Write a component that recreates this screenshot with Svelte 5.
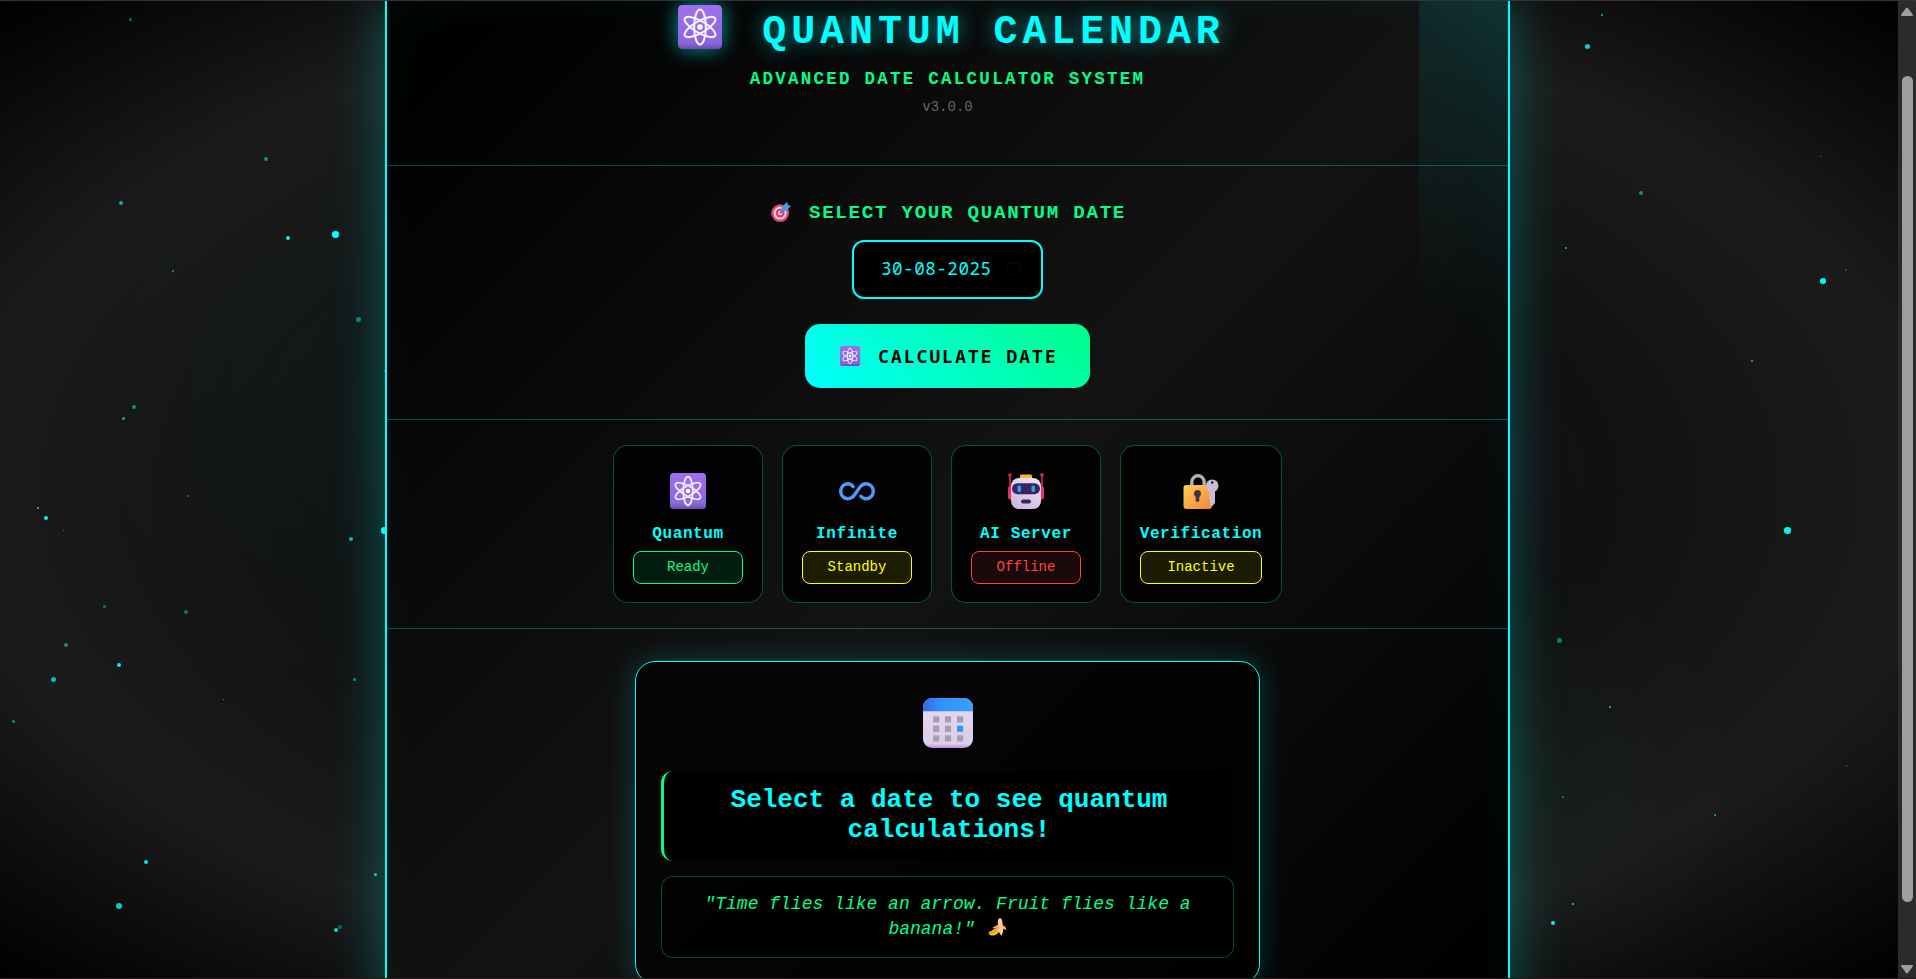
<script>
  const particles = [
    [130, 19, 3, 0.4], [266, 159, 4, 0.5], [121.3, 203.3, 4, 0.65], [335.3, 234.5, 6.5, 1], [288.3, 237.5, 4, 0.95],
    [173, 271, 2.3, 0.6], [358.3, 319.5, 5, 0.45], [134, 407, 4, 0.5], [123.3, 418.5, 3.5, 0.65], [188, 496, 2.2, 0.4],
    [384.5, 371, 2, 0.5], [38, 508, 2.8, 0.8], [46.3, 517.5, 4, 0.95], [63.5, 530.5, 1, 0.6], [351, 539, 4.6, 0.7],
    [384, 530.5, 6.5, 1], [104.3, 606.5, 3, 0.4], [186, 612, 4, 0.4], [66, 645, 4, 0.5], [119.3, 665.3, 4, 0.95],
    [53.4, 679.5, 5.5, 0.7], [354.4, 679.5, 3, 0.5], [223.5, 699.5, 1.1, 0.8], [13.4, 721.5, 3.2, 0.5], [146.3, 861.5, 4, 0.9],
    [375.4, 874.5, 3.6, 0.8], [119.4, 905.5, 6, 0.8], [335.5, 929.5, 4, 0.85], [340, 927, 4, 0.35],
    [1602, 15, 2.8, 0.75], [1587, 46, 5, 0.8], [1820.5, 156.5, 1.1, 0.8], [1641, 193, 4, 0.5], [1566, 248, 2.6, 0.65],
    [1823, 281, 5.6, 0.95], [1846, 270, 2.2, 0.35], [1752, 361, 2.8, 0.75], [1787.4, 530.5, 6.4, 0.95], [1559.4, 640.5, 5, 0.45],
    [1610, 707, 2.6, 0.8], [1846.5, 765.5, 1.1, 0.8], [1563, 797, 2.2, 0.45], [1715, 815, 2.4, 0.65], [1573, 904, 2.6, 0.85],
    [1553.4, 922.5, 4, 0.95]
  ];

  const cards = [
    { icon: 'atom', name: 'Quantum', status: 'Ready', tone: 'green' },
    { icon: 'infinity', name: 'Infinite', status: 'Standby', tone: 'yellow' },
    { icon: 'robot', name: 'AI Server', status: 'Offline', tone: 'red' },
    { icon: 'lock', name: 'Verification', status: 'Inactive', tone: 'yellow' }
  ];
</script>

<svg class="defs" width="0" height="0" aria-hidden="true">
  <defs>
    <linearGradient id="violet" x1="0" y1="0" x2="0" y2="1">
      <stop offset="0" stop-color="#a06fee" /><stop offset="0.85" stop-color="#8a66dc" /><stop offset="1" stop-color="#6f4bb0" />
    </linearGradient>
    <linearGradient id="shell" x1="1" y1="0" x2="0.3" y2="1">
      <stop offset="0" stop-color="#f0e8f4" /><stop offset="1" stop-color="#cdb9e0" />
    </linearGradient>
    <linearGradient id="gold" x1="0" y1="0" x2="1" y2="1">
      <stop offset="0" stop-color="#ffd04e" /><stop offset="1" stop-color="#f5813f" />
    </linearGradient>
    <linearGradient id="sky" x1="0" y1="0" x2="1" y2="0">
      <stop offset="0" stop-color="#3a63e8" /><stop offset="0.3" stop-color="#2f90fb" /><stop offset="1" stop-color="#35a2ff" />
    </linearGradient>
    <linearGradient id="page" x1="0" y1="0" x2="0" y2="1">
      <stop offset="0" stop-color="#e5daf0" /><stop offset="0.92" stop-color="#dccde9" /><stop offset="1" stop-color="#b98bdd" />
    </linearGradient>
  </defs>
</svg>

{#snippet icon(name)}
  <svg class="icon" viewBox="0 0 36 36" aria-hidden="true">
    {#if name === 'atom'}
      <rect width="36" height="36" rx="3.500" fill="url(#violet)" />
      <g fill="none" stroke="#f7efff" stroke-width="1.700">
        <ellipse cx="18" cy="18" rx="4.800" ry="14.300" />
        <ellipse cx="18" cy="18" rx="4.800" ry="14.300" transform="rotate(60 18 18)" />
        <ellipse cx="18" cy="18" rx="4.800" ry="14.300" transform="rotate(120 18 18)" />
      </g>
      <circle cx="18" cy="18" r="2.300" fill="#fff" />
    {:else if name === 'infinity'}
      <path d="M14.200 13.700C12.500 11.300 10.800 10.700 8.800 10.700 4.800 10.700 1.700 14 1.700 18.200S4.800 25.700 8.800 25.700C12 25.700 14.300 23.800 16 21.300L20.200 15.100C21.800 12.600 24 10.700 27.200 10.700 31.200 10.700 34.300 14 34.300 18.200S31.200 25.700 27.200 25.700C25 25.700 23.300 25 21.800 23.200" fill="none" stroke="#5199f8" stroke-width="3.400" stroke-linecap="round" />
    {:else if name === 'robot'}
      <path d="M2 2v24M34 2v24" stroke="#df2c61" stroke-width="1.500" />
      <circle cx="2" cy="2" r="1.900" fill="#c8264f" /><circle cx="34" cy="2" r="1.900" fill="#c8264f" />
      <rect x="0" y="13" width="6" height="13.500" rx="2.500" fill="#f12c64" />
      <rect x="30" y="13" width="6" height="13.500" rx="2.500" fill="#f12c64" />
      <rect x="12" y="1.500" width="12" height="6" rx="1.500" fill="#ffb52e" />
      <rect x="3" y="5" width="30" height="31" rx="8" fill="url(#shell)" />
      <rect x="4" y="10.200" width="28" height="11" rx="5.500" fill="#39275b" />
      <rect x="9.500" y="12.600" width="3.500" height="6.300" rx="1.500" fill="#29a3ff" />
      <rect x="23.500" y="12.600" width="3.500" height="6.300" rx="1.500" fill="#29a3ff" />
      <rect x="13" y="26.500" width="10" height="4" rx="2" fill="#39275b" />
    {:else if name === 'lock'}
      <path d="M8.800 14V9a6.200 6.200 0 0 1 12.400 0v5" fill="none" stroke="#b4adbc" stroke-width="3.400" />
      <rect x="0.500" y="12" width="28.500" height="24" rx="3" fill="url(#gold)" />
      <circle cx="14.500" cy="20.500" r="3.500" fill="#46304f" /><path d="M12.700 20.500h3.600v6.800a1.800 1.800 0 0 1-3.600 0z" fill="#46304f" />
      <circle cx="29.200" cy="12.800" r="6.300" fill="#c9bdd6" />
      <path d="M26.300 17h5.700v13l-2.300 2.800h-1.500l-1.900-1.500 1-1.500-1-1.300 1-1.500-1-1.300z" fill="#c9bdd6" />
      <circle cx="29.200" cy="9.500" r="1.200" fill="#171220" />
    {:else if name === 'target'}
      <circle cx="16.500" cy="20" r="16" fill="#e5406f" />
      <circle cx="16.500" cy="20" r="11.800" fill="#e3cfe4" />
      <circle cx="16.500" cy="20" r="8" fill="#df3f6c" />
      <circle cx="16.500" cy="20" r="4" fill="#e8d4e5" />
      <path d="M16 21 26 10" stroke="#37547e" stroke-width="2" />
      <path d="M18.500 10.500 27 2l2-2 1.500 5.500 5.500 1.500-9 9-7.500 1z" fill="#419df0" />
    {:else if name === 'calendar'}
      <rect width="36" height="36" rx="6.500" fill="url(#page)" />
      <path d="M0 9.500V6.500A6.500 6.500 0 0 1 6.500 0h23A6.500 6.500 0 0 1 36 6.500v3z" fill="url(#sky)" />
      {#each [13.2, 20, 26.900] as y}
        {#each [7.300, 15.800, 24.500] as x}
          <rect {x} {y} width="4.400" height="4.400" fill={y === 20 && x === 24.5 ? '#2c99f7' : '#a59db0'} />
        {/each}
      {/each}
    {:else if name === 'banana'}
      <path d="M20 19C15 19 10 24 1 28c-2 3 1 6 5 7 8 1 15-4 17-12z" fill="#ffb51c" />
      <path d="M2 30c6 0 12-3 15-8" fill="none" stroke="#e08c0c" stroke-width="1.500" />
      <path d="M19 4c1-5 7-5 8 0l2 12v12l-3 8-4-6-4-8z" fill="#ffcb8e" />
      <path d="M20 14C14 15 11 17 8 20c4 1 8 2 13 1z" fill="#f3a866" />
      <path d="M27 14c5 1 8 5 9 10-4-2-7-1-10-2z" fill="#f7b479" />
    {/if}
  </svg>
{/snippet}

<div class="window">
  <div class="viewport">
    {#each particles as [x, y, size, alpha]}
      <i class="particle" style="left:{x - size / 2}px;top:{y - 1 - size / 2}px;width:{size}px;height:{size}px;opacity:{alpha}"></i>
    {/each}

    <main class="container">
      <div class="sheen"></div>
      <header>
        <h1><span class="title-icon">{@render icon('atom')}</span><span>QUANTUM CALENDAR</span></h1>
        <p class="subtitle">ADVANCED DATE CALCULATOR SYSTEM</p>
        <p class="version">v3.0.0</p>
      </header>

      <section class="picker">
        <h2><span class="target-icon">{@render icon('target')}</span><span>SELECT YOUR QUANTUM DATE</span></h2>
        <div class="date">
          <span>30-08-2025</span>
          <svg viewBox="0 0 16 16" width="16" height="16"><path d="M1.500 3h13v11.500h-13zM1.500 3.500h13M4 1v2M12 1v2" fill="none" stroke="#070707" stroke-width="1.500" /></svg>
        </div>
        <button><span class="button-icon">{@render icon('atom')}</span><span>CALCULATE DATE</span></button>
      </section>

      <section class="cards">
        {#each cards as card}
          <article class="card">
            <span class="card-icon">{@render icon(card.icon)}</span>
            <h3>{card.name}</h3>
            <span class="badge {card.tone}">{card.status}</span>
          </article>
        {/each}
      </section>

      <section class="result">
        <div class="panel">
          <span class="calendar-icon">{@render icon('calendar')}</span>
          <div class="message">Select a date to see quantum<br />calculations!</div>
          <div class="quote">"Time flies like an arrow. Fruit flies like a<br />banana!" <span class="banana-icon">{@render icon('banana')}</span></div>
        </div>
      </section>
    </main>
  </div>

  <aside class="scrollbar">
    <svg viewBox="0 0 14 11" width="14" height="11"><path d="M7 2.500 12 9H2z" fill="#9f9f9f" stroke="#9f9f9f" stroke-width="2" stroke-linejoin="round" /></svg>
    <div class="thumb"></div>
    <svg viewBox="0 0 14 11" width="14" height="11"><path d="M7 8.500 12 2H2z" fill="#9f9f9f" stroke="#9f9f9f" stroke-width="2" stroke-linejoin="round" /></svg>
  </aside>
</div>

<style>
  :global(body) { margin: 0; background: #000; overflow: hidden; }
  h1, h2, h3, p { margin: 0; }
  .defs { position: absolute; }
  .icon { display: block; width: 100%; height: 100%; overflow: visible; }
  .window {
    box-sizing: border-box;
    display: flex;
    width: 1916px;
    height: 979px;
    overflow: hidden;
    border-top: 1px solid #333336;
    border-bottom: 1px solid #221c1c;
    font-family: "Liberation Mono", monospace;
  }
  .viewport {
    position: relative;
    flex: 1;
    overflow: hidden;
    background:
      radial-gradient(circle at 20% 42%, rgba(0, 255, 255, 0.03) 0%, transparent 290px),
      radial-gradient(circle at 80% 80%, rgba(0, 255, 136, 0.03) 0%, transparent 220px),
      radial-gradient(circle at 80% 48%, rgba(255, 0, 255, 0.015) 0%, transparent 130px),
      radial-gradient(ellipse at center, #0a0a0a 0%, #111 48%, #1b1b1b 73%, #000 100%);
  }
  .particle { position: absolute; border-radius: 50%; background: #0ff; }
  .container {
    position: relative;
    box-sizing: border-box;
    width: 1125px;
    height: 1080px;
    margin-left: 385px;
    border: solid #0ff;
    border-width: 0 2px;
    background: linear-gradient(135deg, #000 3%, #131313 50%, #000 94%);
    box-shadow: 0 0 50px rgba(0, 255, 255, 0.3), inset 0 0 80px rgba(0, 255, 255, 0.035);
  }
  .sheen {
    position: absolute;
    top: 0;
    right: 0;
    width: 89px;
    height: 335px;
    background: linear-gradient(80deg, rgba(0, 255, 255, 0.07), rgba(0, 255, 255, 0.12));
    mask-image: linear-gradient(#000, transparent);
  }
  header {
    box-sizing: border-box;
    height: 165px;
    padding-top: 4px;
    border-bottom: 1px solid rgba(0, 255, 255, 0.3);
    text-align: center;
  }
  h1 {
    display: flex;
    justify-content: center;
    gap: 40px;
    height: 50px;
    padding-left: 8px;
    color: #0ff;
    font-size: 40px;
    line-height: 55px;
    letter-spacing: 4.900px;
    text-shadow: 0 0 20px rgba(0, 255, 255, 0.550);
  }
  .title-icon { width: 44px; height: 44px; filter: drop-shadow(0 0 10px rgba(0, 255, 255, 0.600)); }
  .subtitle {
    margin-top: 12px;
    color: #00ff88;
    font-size: 17.500px;
    font-weight: 700;
    line-height: 24px;
    letter-spacing: 2.250px;
  }
  .version { margin-top: 6px; color: #666; font-size: 14px; line-height: 20px; }
  .picker {
    box-sizing: border-box;
    display: flex;
    flex-direction: column;
    align-items: center;
    height: 254px;
    padding-top: 36px;
    border-bottom: 1px solid rgba(0, 255, 255, 0.3);
  }
  h2 {
    display: flex;
    gap: 18px;
    height: 24px;
    padding-left: 2px;
    color: #00ff88;
    font-size: 19.200px;
    line-height: 23px;
    letter-spacing: 1.700px;
  }
  .target-icon { width: 20px; height: 20px; }
  .date {
    box-sizing: border-box;
    display: flex;
    align-items: center;
    justify-content: space-between;
    width: 191px;
    height: 59px;
    margin-top: 14px;
    padding: 0 19px 3px 27px;
    border: 2px solid #0ff;
    border-radius: 12px;
    background: #000;
    color: #0ff;
    font: 17.600px/24px "Noto Sans Mono", "DejaVu Sans Mono", monospace;
    letter-spacing: 0.500px;
  }
  button {
    display: flex;
    align-items: center;
    justify-content: center;
    gap: 18px;
    width: 285px;
    height: 64px;
    margin-top: 25px;
    padding: 0 0 0 3px;
    border: 0;
    border-radius: 15px;
    background: linear-gradient(45deg, #0ff, #00ff88);
    color: #000;
    font: 700 17.800px/24px "Noto Sans Mono", "DejaVu Sans Mono", monospace;
    letter-spacing: 2.150px;
  }
  .button-icon { width: 20px; height: 20px; }
  .cards {
    box-sizing: border-box;
    display: flex;
    justify-content: center;
    gap: 19px;
    height: 209px;
    padding: 25px 0;
    border-bottom: 1px solid rgba(0, 255, 255, 0.3);
  }
  .card {
    box-sizing: border-box;
    display: flex;
    flex-direction: column;
    align-items: center;
    width: 150px;
    height: 158px;
    padding: 27px 19px 0;
    border: 1px solid rgba(0, 255, 255, 0.3);
    border-radius: 15px;
    background: rgba(0, 0, 0, 0.8);
  }
  .card:last-child { width: 162px; }
  .card-icon { width: 36px; height: 36px; }
  h3 {
    margin-top: 15px;
    color: #0ff;
    font-size: 16px;
    line-height: 20px;
    letter-spacing: 0.620px;
    white-space: nowrap;
  }
  .badge {
    box-sizing: border-box;
    align-self: stretch;
    height: 33px;
    margin-top: 7px;
    border: 1px solid;
    border-radius: 8px;
    font-size: 14px;
    line-height: 31px;
    text-align: center;
  }
  .green { color: #00ff88; background: rgba(0, 255, 136, 0.1); }
  .yellow { color: #ff0; background: rgba(255, 255, 0, 0.1); }
  .red { color: #ff4444; background: rgba(255, 68, 68, 0.1); }
  .result { display: flex; justify-content: center; padding-top: 32px; }
  .panel {
    box-sizing: border-box;
    display: flex;
    flex-direction: column;
    align-items: center;
    width: 625px;
    height: 323px;
    padding: 36px 25px 0;
    border: 1px solid #0ff;
    border-radius: 20px;
    background: rgba(0, 0, 0, 0.7);
    box-shadow: 0 0 30px rgba(0, 255, 255, 0.2);
  }
  .calendar-icon { width: 50px; height: 50px; }
  .message {
    box-sizing: border-box;
    align-self: stretch;
    height: 90px;
    margin-top: 23px;
    padding: 14px 0 0;
    border-left: 3px solid #00ff88;
    border-radius: 12px;
    background: rgba(0, 0, 0, 0.8);
    color: #0ff;
    font-size: 26px;
    font-weight: 700;
    line-height: 30px;
    text-align: center;
  }
  .quote {
    box-sizing: border-box;
    align-self: stretch;
    height: 82px;
    margin-top: 15px;
    padding-top: 15px;
    border: 1px solid rgba(0, 255, 136, 0.3);
    border-radius: 12px;
    background: rgba(0, 0, 0, 0.6);
    color: #00ff88;
    font-size: 18px;
    font-style: italic;
    line-height: 24.700px;
    text-align: center;
  }
  .banana-icon { display: inline-block; width: 19px; height: 18px; margin-left: 2px; vertical-align: -2px; }
  .scrollbar {
    box-sizing: border-box;
    display: flex;
    flex-direction: column;
    align-items: center;
    width: 18px;
    height: 977px;
    padding: 5px 0 3px;
    background: #2b2b2b;
  }
  .thumb { width: 11px; height: 826px; margin: 59px 0 auto; border-radius: 6px; background: #9f9f9f; }
</style>
